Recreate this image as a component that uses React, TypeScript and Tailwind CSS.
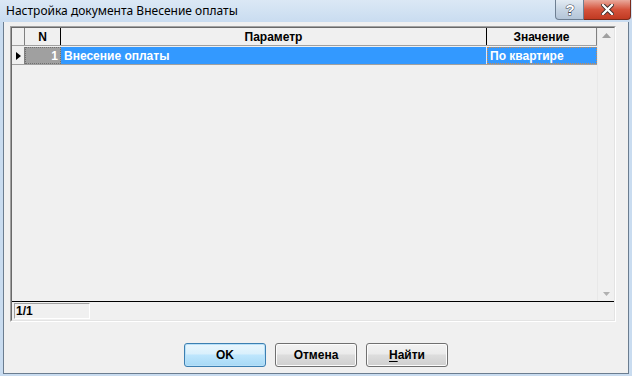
import { ReactNode } from 'react'

const GRID_FONT = { fontFamily: '"Liberation Sans", Arial, sans-serif' }

function Win7Button({ children, primary }: { children: ReactNode; primary?: boolean }) {
  return (
    <button
      className={`w-[82px] h-[24px] rounded-[3px] border text-[12px] font-bold text-black flex items-center justify-center ${
        primary
          ? 'border-[#3c7fb1] shadow-[inset_0_0_0_1px_#b8e0f8] bg-[linear-gradient(#eaf6fd_0%,#d9f0fc_45%,#bee6fd_50%,#a7d9f5_100%)]'
          : 'border-[#707070] shadow-[inset_0_0_0_1px_#fcfcfc] bg-[linear-gradient(#f2f2f2_0%,#ebebeb_45%,#dddddd_50%,#cfcfcf_100%)]'
      }`}
      style={GRID_FONT}
    >
      {children}
    </button>
  )
}

export default function App() {
  return (
    <div className="w-[632px] h-[376px] bg-[#c9dcf0] flex flex-col overflow-hidden">
      {/* title bar */}
      <div className="h-[22px] flex items-start bg-[linear-gradient(#dbe8f5,#c9dcf0)] relative">
        <span
          className="pl-[6px] pt-[3px] text-[12px] text-black leading-[15px]"
          style={{ fontFamily: '"Noto Sans", "Open Sans", sans-serif' }}
        >
          Настройка документа Внесение оплаты
        </span>
        <div className="ml-auto flex h-[20px] mr-[1px]">
          <div className="w-[29px] h-[20px] border border-[#6e7f92] border-t-0 rounded-bl-[4px] bg-[linear-gradient(#e3ebf3,#c7d5e4_50%,#b4c5d8)] flex items-center justify-center">
            <svg width="14" height="16" viewBox="0 0 14 16">
              <text
                x="7"
                y="13"
                textAnchor="middle"
                fontSize="15"
                fontWeight="bold"
                fontFamily="Liberation Sans, Arial, sans-serif"
                fill="#ffffff"
                stroke="#3b4250"
                strokeWidth="1"
                paintOrder="stroke"
              >
                ?
              </text>
            </svg>
          </div>
          <div className="w-[47px] h-[20px] border border-[#7a2b1c] border-t-0 border-l-0 rounded-br-[4px] bg-[linear-gradient(#e9a99c,#d5533c_50%,#c13a22)] flex items-center justify-center">
            <svg width="13" height="11" viewBox="0 0 13 11">
              <path d="M2 1 L11 10 M11 1 L2 10" stroke="#3a2a2a" strokeWidth="4" strokeLinecap="square" />
              <path d="M2 1 L11 10 M11 1 L2 10" stroke="#ffffff" strokeWidth="2.2" strokeLinecap="square" />
            </svg>
          </div>
        </div>
      </div>

      {/* window body */}
      <div className="ml-[3px] mr-[3px] h-[352px] bg-[#f0f0f0] border border-t-0 border-[#6b7d90] flex flex-col px-[6px] pt-[4px]">
        {/* grid */}
        <div className="w-[606px] h-[296px] border border-t-[#a0a0a0] border-l-[#a0a0a0] border-r-white border-b-white flex flex-col" style={GRID_FONT}>
          <div className="flex-1 border border-t-[#696969] border-l-[#696969] border-r-[#e3e3e3] border-b-[#e3e3e3] flex flex-col">
            <div className="flex flex-1 min-h-0">
              <div className="flex-1 flex flex-col">
                {/* header */}
                <div className="flex h-[18px] text-[12px] font-bold text-black border-b border-[#a0a0a0]">
                  <div className="w-[13px] border-r border-[#808080]" />
                  <div className="w-[36px] border-r border-black flex items-center justify-center">N</div>
                  <div className="w-[426px] border-r border-black flex items-center justify-center">Параметр</div>
                  <div className="flex-1 border-r border-[#808080] flex items-center justify-center">Значение</div>
                </div>
                {/* row */}
                <div className="flex h-[18px] mt-[1px] text-[12px] font-bold text-white border-b border-[#a0a0a0]">
                  <div className="w-[13px] border-r border-[#808080] flex items-center justify-center">
                    <svg width="5" height="8" viewBox="0 0 5 8">
                      <path d="M0 0 L5 4 L0 8 Z" fill="#000" />
                    </svg>
                  </div>
                  <div className="w-[36px] bg-[#a0a0a0] border border-dotted border-[#707070] flex items-center justify-end pr-[2px]">1</div>
                  <div className="w-[426px] bg-[#3399ff] border-r border-[#d8e8ff] flex items-center pl-[3px]">Внесение оплаты</div>
                  <div className="flex-1 bg-[#3399ff] border border-dotted border-[#c88a50] flex items-center pl-[2px]">По квартире</div>
                </div>
                <div className="flex-1" />
              </div>
              {/* scrollbar */}
              <div className="w-[17px] bg-[#f0f0f0] border-l border-[#e8e8e8] flex flex-col items-center justify-between py-[5px]">
                <svg width="9" height="5" viewBox="0 0 9 5">
                  <path d="M0 5 L4.5 0 L9 5 Z" fill="#a0a0a0" />
                </svg>
                <svg width="7" height="4" viewBox="0 0 7 4">
                  <path d="M0 0 L3.5 4 L7 0 Z" fill="#b0b0b0" />
                </svg>
              </div>
            </div>
            {/* status */}
            <div className="h-[19px] border-t border-black flex items-center pl-[2px]">
              <div className="w-[76px] h-[16px] border border-t-[#a0a0a0] border-l-[#a0a0a0] border-r-white border-b-white text-[12px] font-bold text-black leading-[14px] pl-[1px]">
                1/1
              </div>
            </div>
          </div>
        </div>

        {/* buttons */}
        <div className="flex gap-[9px] mt-[21px] ml-[174px]">
          <Win7Button primary>OK</Win7Button>
          <Win7Button>Отмена</Win7Button>
          <Win7Button>
            <span>
              <span className="underline underline-offset-2">Н</span>айти
            </span>
          </Win7Button>
        </div>
      </div>
    </div>
  )
}
